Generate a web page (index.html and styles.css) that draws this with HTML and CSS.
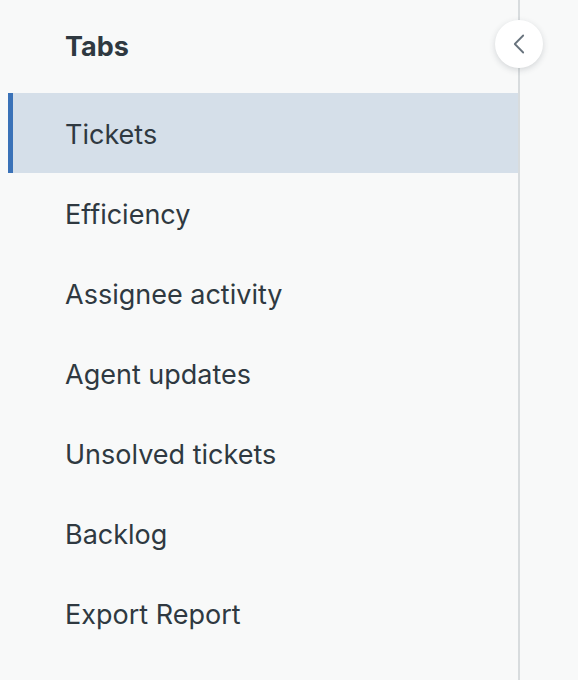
FILE: index.html
```html
<!DOCTYPE html>
<html>
<head>
<meta charset="utf-8">
<link rel="stylesheet" href="styles.css">
</head>
<body>
<div class="page">
  <nav class="sidebar">
    <h2 class="title">Tabs</h2>
    <ul class="tabs">
      <li class="tab active">Tickets</li>
      <li class="tab">Efficiency</li>
      <li class="tab">Assignee activity</li>
      <li class="tab">Agent updates</li>
      <li class="tab">Unsolved tickets</li>
      <li class="tab">Backlog</li>
      <li class="tab">Export Report</li>
    </ul>
    <button class="collapse" aria-label="Collapse">
      <svg width="20" height="20" viewBox="0 0 20 20"><path d="M14.2 1.5 L5.8 10 L14.2 18.5" fill="none" stroke="#68737d" stroke-width="1.8" stroke-linecap="round" stroke-linejoin="round"/></svg>
    </button>
  </nav>
  <main class="content"></main>
</div>
</body>
</html>
```
FILE: styles.css
```css
html, body {
  margin: 0;
  padding: 0;
  background: #f8f9f9;
  height: 100%;
}
body {
  font-family: Inter, "Noto Sans", sans-serif;
  color: #2f3941;
}
.page {
  display: flex;
  height: 680px;
  padding-left: 8px;
  box-sizing: border-box;
}
.sidebar {
  position: relative;
  width: 510px;
  border-right: 2px solid #d8dcde;
  flex: none;
}
.title {
  margin: 0;
  height: 93px;
  box-sizing: border-box;
  padding: 30px 0 0 57px;
  font-size: 27px;
  font-weight: 700;
  line-height: 34px;
}
.tabs {
  list-style: none;
  margin: 0;
  padding: 0;
}
.tab {
  height: 80px;
  display: flex;
  align-items: center;
  padding-left: 52px;
  padding-top: 2px;
  font-size: 27px;
  border-left: 5px solid transparent;
  box-sizing: border-box;
}
.tab.active {
  background: #d5dfe9;
  border-left-color: #3a72b8;
}
.collapse {
  position: absolute;
  top: 20px;
  right: -25px;
  width: 48px;
  height: 48px;
  border-radius: 50%;
  border: none;
  background: #fff;
  box-shadow: 0 2px 6px rgba(47, 57, 65, 0.18);
  display: flex;
  align-items: center;
  justify-content: center;
  padding: 0;
}
.content {
  flex: 1;
}
```
